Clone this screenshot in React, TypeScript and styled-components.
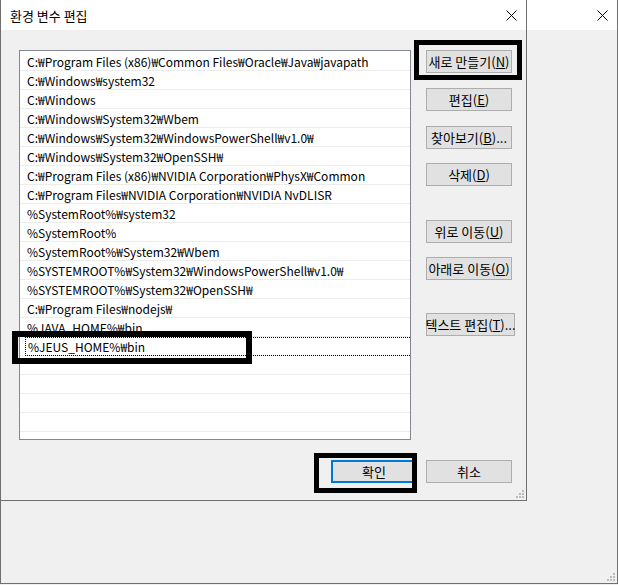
import React from 'react';
import styled, { createGlobalStyle } from 'styled-components';

const GlobalStyle = createGlobalStyle`
  html, body {
    margin: 0;
    padding: 0;
    background: #f0f0f0;
  }
  * {
    box-sizing: border-box;
  }
`;

const font = `"Noto Sans CJK KR", "Noto Sans", sans-serif`;

const paths = [
  'C:₩Program Files (x86)₩Common Files₩Oracle₩Java₩javapath',
  'C:₩Windows₩system32',
  'C:₩Windows',
  'C:₩Windows₩System32₩Wbem',
  'C:₩Windows₩System32₩WindowsPowerShell₩v1.0₩',
  'C:₩Windows₩System32₩OpenSSH₩',
  'C:₩Program Files (x86)₩NVIDIA Corporation₩PhysX₩Common',
  'C:₩Program Files₩NVIDIA Corporation₩NVIDIA NvDLISR',
  '%SystemRoot%₩system32',
  '%SystemRoot%',
  '%SystemRoot%₩System32₩Wbem',
  '%SYSTEMROOT%₩System32₩WindowsPowerShell₩v1.0₩',
  '%SYSTEMROOT%₩System32₩OpenSSH₩',
  'C:₩Program Files₩nodejs₩',
  '%JAVA_HOME%₩bin',
  '%JEUS_HOME%₩bin',
];

const EMPTY_ROWS = 5;

const Desktop = styled.div`
  position: relative;
  width: 618px;
  height: 585px;
  font-family: ${font};
  font-size: 12px;
  color: #000;
`;

const BackWindow = styled.div`
  width: 618px;
  height: 584px;
  display: flex;
  flex-direction: column;
  border: 1px solid #707070;
  border-top: none;
  background: #f0f0f0;
`;

const TitleBar = styled.div`
  height: 30px;
  flex-shrink: 0;
  display: flex;
  align-items: center;
  justify-content: space-between;
  padding: 0 9px 0 9px;
  background: #fff;
`;

const Title = styled.span`
  font-size: 13px;
  line-height: 1;
  color: #000;
`;

const WindowBody = styled.div`
  flex: 1;
  display: flex;
  flex-direction: column;
`;

const Grip = styled.div`
  margin-top: auto;
  align-self: flex-end;
  width: 8px;
  height: 8px;
  margin-right: 2px;
  margin-bottom: 2px;
  display: flex;
`;

const Dialog = styled.div`
  position: absolute;
  left: 0;
  top: 0;
  width: 527px;
  height: 501px;
  display: flex;
  flex-direction: column;
  border: 1px solid #6f6f6f;
  border-top: none;
  background: #f0f0f0;
`;

const DialogMain = styled.div`
  display: grid;
  grid-template-columns: 392px auto;
  column-gap: 15px;
  padding: 20px 0 0 18px;
`;

const List = styled.div`
  height: 390px;
  border: 1px solid #828790;
  background: #fff;
  padding-top: 1px;
  overflow: hidden;
`;

const Row = styled.div`
  height: 19px;
  display: flex;
  align-items: stretch;
  border-bottom: 1px solid #ececec;
  white-space: nowrap;
`;

const RowText = styled.span<{ $focused?: boolean }>`
  flex: 1;
  display: flex;
  align-items: center;
  line-height: 1;
  padding-top: 1px;
  padding-left: ${(p) => (p.$focused ? '2px' : '7px')};
  margin-left: ${(p) => (p.$focused ? '5px' : '0')};
  border: ${(p) => (p.$focused ? '1px dotted #000' : 'none')};
  border-right: none;
  margin-bottom: ${(p) => (p.$focused ? '-1px' : '0')};
`;

const SideButtons = styled.div`
  display: flex;
  flex-direction: column;
  align-items: flex-start;
`;

const Button = styled.button<{ $space?: number; $width?: number; $primary?: boolean }>`
  margin: ${(p) => p.$space ?? 0}px 0 0 0;
  width: ${(p) => p.$width ?? 86}px;
  height: 23px;
  padding: 0;
  background: #e1e1e1;
  border: 1px solid ${(p) => (p.$primary ? '#0078d7' : '#adadad')};
  box-shadow: ${(p) => (p.$primary ? 'inset 0 0 0 1px #0078d7' : 'none')};
  font-family: ${font};
  font-size: 13px;
  line-height: 1;
  color: #000;
  white-space: nowrap;
  display: flex;
  align-items: center;
  justify-content: center;

  u {
    text-decoration-thickness: 1px;
    text-underline-offset: 1px;
  }
`;

const Footer = styled.div`
  display: flex;
  justify-content: flex-end;
  gap: 9px;
  margin-top: 20px;
  padding-right: 14px;
`;

const Mark = styled.div<{ $x: number; $y: number; $w: number; $h: number; $t: number }>`
  position: absolute;
  left: ${(p) => p.$x}px;
  top: ${(p) => p.$y}px;
  width: ${(p) => p.$w}px;
  height: ${(p) => p.$h}px;
  border: ${(p) => p.$t}px solid #000;
  pointer-events: none;
`;

function CloseIcon() {
  return (
    <svg width="11" height="11" viewBox="0 0 11 11">
      <path d="M0.5 0.5 L10.5 10.5 M10.5 0.5 L0.5 10.5" stroke="#000" strokeWidth="1" fill="none" />
    </svg>
  );
}

function GripDots() {
  const dots = [
    [6, 0],
    [3, 3],
    [6, 3],
    [0, 6],
    [3, 6],
    [6, 6],
  ];
  return (
    <svg width="8" height="8" viewBox="0 0 8 8">
      {dots.map(([x, y]) => (
        <rect key={`${x}-${y}`} x={x} y={y} width="2" height="2" fill="#bcbcbc" />
      ))}
    </svg>
  );
}

export default function App() {
  return (
    <>
      <GlobalStyle />
      <Desktop>
        <BackWindow>
          <TitleBar>
            <Title />
            <CloseIcon />
          </TitleBar>
          <WindowBody>
            <Grip>
              <GripDots />
            </Grip>
          </WindowBody>
        </BackWindow>

        <Dialog>
          <TitleBar>
            <Title>환경 변수 편집</Title>
            <CloseIcon />
          </TitleBar>
          <DialogMain>
            <List>
              {paths.map((p, i) => (
                <Row key={p}>
                  <RowText $focused={i === paths.length - 1}>{p}</RowText>
                </Row>
              ))}
              {Array.from({ length: EMPTY_ROWS }).map((_, i) => (
                <Row key={`empty-${i}`} />
              ))}
            </List>
            <SideButtons>
              <Button $space={0}>
                새로 만들기(<u>N</u>)
              </Button>
              <Button $space={15}>
                편집(<u>E</u>)
              </Button>
              <Button $space={15}>
                찾아보기(<u>B</u>)...
              </Button>
              <Button $space={14}>
                삭제(<u>D</u>)
              </Button>
              <Button $space={34}>
                위로 이동(<u>U</u>)
              </Button>
              <Button $space={14}>
                아래로 이동(<u>O</u>)
              </Button>
              <Button $space={33} $width={89}>
                텍스트 편집(<u>T</u>)...
              </Button>
            </SideButtons>
          </DialogMain>
          <Footer>
            <Button $primary>확인</Button>
            <Button>취소</Button>
          </Footer>
          <Grip>
            <GripDots />
          </Grip>
        </Dialog>

        <Mark $x={414} $y={40} $w={108} $h={40} $t={5} />
        <Mark $x={12} $y={331} $w={240} $h={33} $t={6} />
        <Mark $x={314} $y={453} $w={103} $h={40} $t={5} />
      </Desktop>
    </>
  );
}
